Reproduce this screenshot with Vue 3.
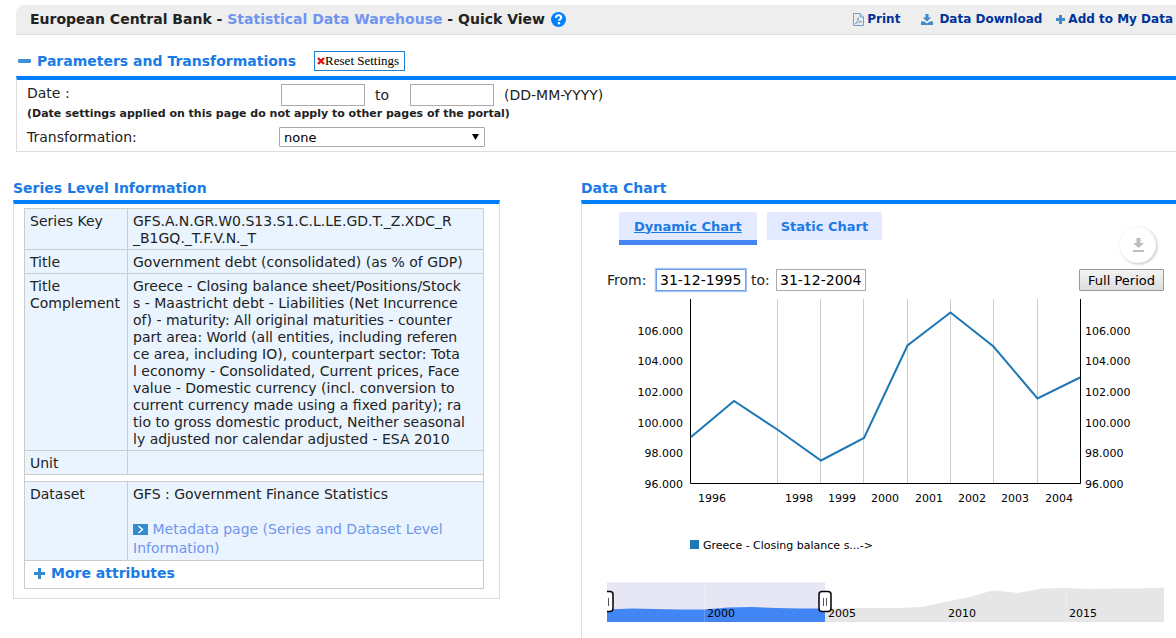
<script setup>
import { ref } from 'vue'

const dateFrom = ref('')
const dateTo = ref('')
const transformation = ref('none')
const periodFrom = ref('31-12-1995')
const periodTo = ref('31-12-2004')

const rows = [
  { name: 'Series Key', value: 'GFS.A.N.GR.W0.S13.S1.C.L.LE.GD.T._Z.XDC_R\n_B1GQ._T.F.V.N._T' },
  { name: 'Title', value: 'Government debt (consolidated) (as % of GDP)' },
  {
    name: 'Title\nComplement',
    value: [
      'Greece - Closing balance sheet/Positions/Stock',
      's - Maastricht debt - Liabilities (Net Incurrence',
      'of) - maturity: All original maturities - counter',
      'part area: World (all entities, including referen',
      'ce area, including IO), counterpart sector: Tota',
      'l economy - Consolidated, Current prices, Face',
      'value - Domestic currency (incl. conversion to',
      'current currency made using a fixed parity); ra',
      'tio to gross domestic product, Neither seasonal',
      'ly adjusted nor calendar adjusted - ESA 2010'
    ].join('\n')
  },
  { name: 'Unit', value: '' }
]

const yTicks = [
  { label: '106.000', y: 42 },
  { label: '104.000', y: 72 },
  { label: '102.000', y: 103 },
  { label: '100.000', y: 134 },
  { label: '98.000', y: 164 },
  { label: '96.000', y: 195 }
]
const xTicks = [
  { label: '1996', x: 105 },
  { label: '1998', x: 192 },
  { label: '1999', x: 235 },
  { label: '2000', x: 278 },
  { label: '2001', x: 322 },
  { label: '2002', x: 365 },
  { label: '2003', x: 408 },
  { label: '2004', x: 452 }
]
const gridLines = [170.5, 213.5, 256.5, 300.5, 343.5, 386.5, 430.5]
const line = '84,146 127,110 171,139 214,169.5 257,147 300.5,54.5 343.5,21.5 386.5,55.5 430.5,107.5 473,86.5'
const navLabels = [
  { label: '2000', x: 100 },
  { label: '2005', x: 221 },
  { label: '2010', x: 341 },
  { label: '2015', x: 462 }
]
</script>

<template>
  <div class="page">
    <header class="topbar">
      <h1>
        <span>European Central Bank - <a href="#">Statistical Data Warehouse</a> - Quick View</span>
        <svg class="help" viewBox="0 0 16 16" role="img" aria-label="Help">
          <circle cx="8" cy="8" r="8" fill="#0080ff" />
          <path d="M5.200 6.200C5.300 4.300 6.500 3.500 8 3.500c1.700 0 2.900 1 2.900 2.400 0 1.900-2.300 1.900-2.300 3.500" fill="none" stroke="#fff" stroke-width="2.200" />
          <rect x="7.300" y="10.800" width="2.400" height="2.400" fill="#fff" />
        </svg>
      </h1>
      <nav class="actions">
        <a href="#" class="print">
          <svg width="11" height="13" viewBox="0 0 11 13" fill="none" stroke="#6aa0d4">
            <path d="M.5.5h6.500l3.500 3.500v8.500H.5zM7 .5v3.500h3.500" />
            <path d="M2 11c2-1.500 3-4 3-6.500 0 2.500 1.500 4.300 4 4.500-2.500-.3-4.500.3-7 2z" stroke-width=".8" />
          </svg>
          Print</a>
        <a href="#" class="download">
          <svg width="12" height="11" viewBox="0 0 12 11" fill="#3f8acb">
            <path d="M4.500 0h3v3.500h2.700L6 7.500 1.800 3.500h2.700z" />
            <path d="M0 7.500h3.200L6 9.500 8.800 7.500H12V11H0z" />
          </svg>
          Data Download</a>
        <a href="#" class="add">
          <svg width="9" height="9" viewBox="0 0 9 9" fill="#3f8acb"><path d="M3 0h3v3h3v3H6v3H3V6H0V3h3z" /></svg>
          Add to My Data</a>
      </nav>
    </header>

    <section class="params">
      <div class="params-head">
        <svg width="13" height="4" viewBox="0 0 13 4"><rect width="13" height="4" rx="1" fill="#3f8fd6" /></svg>
        <h2>Parameters and Transformations</h2>
        <button type="button" class="reset">
          <svg width="8" height="8" viewBox="0 0 8 8"><path d="M1 1l6 6M7 1L1 7" stroke="#e01010" stroke-width="2.400" /></svg>Reset Settings</button>
      </div>
      <div class="params-body">
        <div class="field">
          <label class="name date-name" for="date-from">Date :</label>
          <input id="date-from" v-model="dateFrom" type="text" class="date">
          <label class="to" for="date-to">to</label>
          <input id="date-to" v-model="dateTo" type="text" class="date">
          <span class="format">(DD-MM-YYYY)</span>
        </div>
        <p class="note">(Date settings applied on this page do not apply to other pages of the portal)</p>
        <div class="field">
          <label class="name" for="transformation">Transformation:</label>
          <div class="select">
            <select id="transformation" v-model="transformation">
              <option>none</option>
            </select>
            <svg width="7" height="6" viewBox="0 0 7 6"><path d="M0 0h7L3.500 6z" /></svg>
          </div>
        </div>
      </div>
    </section>

    <main class="columns">
      <section class="series">
        <h2>Series Level Information</h2>
        <div class="panel">
          <table>
            <tbody>
              <tr v-for="row in rows" :key="row.name">
                <th scope="row">{{ row.name }}</th>
                <td>{{ row.value }}</td>
              </tr>
            </tbody>
            <tbody>
              <tr class="gap"><td colspan="2"></td></tr>
              <tr>
                <th scope="row">Dataset</th>
                <td class="dataset">
                  <p>GFS : Government Finance Statistics</p>
                  <a href="#"><svg width="15" height="11" viewBox="0 0 15 11"><rect width="15" height="11" fill="#338bd0" /><path d="M5.500 2l4 3.500-4 3.500" fill="none" stroke="#fff" stroke-width="1.500" /></svg> Metadata page (Series and Dataset Level Information)</a>
                </td>
              </tr>
              <tr class="more">
                <td colspan="2">
                  <a href="#"><svg width="11" height="11" viewBox="0 0 11 11" fill="#338bd0"><path d="M4 0h3v4h4v3H7v4H4V7H0V4h4z" /></svg>More attributes</a>
                </td>
              </tr>
            </tbody>
          </table>
        </div>
      </section>

      <section class="chart">
        <h2>Data Chart</h2>
        <div class="panel">
          <div class="tabs">
            <button type="button" class="tab active">Dynamic Chart</button>
            <button type="button" class="tab">Static Chart</button>
            <button type="button" class="save" aria-label="Download chart">
              <svg width="11" height="14" viewBox="0 0 11 14" fill="#bdbdbd"><path d="M3.500 0h4v5H11L5.500 10 0 5h3.500zM0 12h11v2H0z" /></svg>
            </button>
          </div>
          <div class="period">
            <label class="from-label" for="period-from">From:</label>
            <input id="period-from" v-model="periodFrom" type="text" class="focused">
            <label class="to-label" for="period-to">to:</label>
            <input id="period-to" v-model="periodTo" type="text">
            <button type="button" class="full">Full Period</button>
          </div>
          <svg class="plot" viewBox="0 0 557 331">
            <path v-for="x in gridLines" :key="x" :d="`M${x} 8V192`" stroke="#ccc" />
            <path d="M83.500 8V192.500H473.500V8" fill="none" stroke="#000" />
            <polyline :points="line" fill="none" stroke="#1f77b4" stroke-width="2" />
            <g v-for="t in yTicks" :key="t.label">
              <text :x="76" :y="t.y + 2" text-anchor="end">{{ t.label }}</text>
              <text :x="478" :y="t.y + 2">{{ t.label }}</text>
            </g>
            <text v-for="t in xTicks" :key="t.label" :x="t.x" y="211" text-anchor="middle">{{ t.label }}</text>
            <rect x="83" y="249" width="9" height="9" fill="#1f77b4" />
            <text x="96" y="258">Greece - Closing balance s...-&gt;</text>

            <path d="M218 331V318L242 317 290 317 315 316 328 313 363 306 385 299.500 393 300 411 302 435 297.500 459 297 483 298 508 297.500 533 297.500 557 296.500V331z" fill="#e6e6e6" />
            <rect y="291.500" width="218" height="39.500" fill="#e6e6f5" />
            <path d="M0 331V318.500L25 317.500 73 318.500 97 318.500 121 316.500 145 316 169 317 193 317.500 218 317.500V331z" fill="#4285f4" />
            <path d="M97.500 292V331" stroke="#fff" stroke-opacity=".2" />
            <path d="M459.500 297V331" stroke="#fff" stroke-opacity=".3" />
            <text v-for="t in navLabels" :key="t.label" :x="t.x" y="326">{{ t.label }}</text>
            <path d="M0 300.500H3Q6 300.500 6 303.500V317.500Q6 320.500 3 320.500H0" fill="#fff" stroke="#000" stroke-width="1.500" />
            <path d="M1.500 307V315" stroke="#555" />
            <rect x="212" y="300.500" width="12" height="20" rx="3" fill="#fff" stroke="#000" stroke-width="1.500" />
            <path d="M216.500 307V315M219.500 307V315" stroke="#555" />
          </svg>
        </div>
      </section>
    </main>
  </div>
</template>

<style>
body {
  margin: 0;
  background: #fff;
}
</style>

<style scoped>
* {
  box-sizing: border-box;
}
.page {
  min-height: 100vh;
  display: flex;
  flex-direction: column;
  padding-top: 5px;
  font: 14px/17px Verdana, "DejaVu Sans", sans-serif;
  color: #222;
}
h1, h2, p {
  margin: 0;
}
a {
  color: #7094f0;
  text-decoration: none;
}
button, input, select {
  font-family: inherit;
  color: #000;
}
.topbar {
  display: flex;
  justify-content: space-between;
  align-items: center;
  height: 30px;
  margin-left: 16px;
  padding: 0 3px 0 14px;
  background: #eee;
  border-bottom: 1px solid #ddd;
  border-top-left-radius: 8px;
  white-space: nowrap;
}
h1 {
  display: flex;
  align-items: center;
  gap: 6px;
  font-size: 14px;
}
.help {
  width: 15px;
  height: 15px;
}
.actions {
  display: flex;
  gap: 14px;
  font-size: 12px;
  font-weight: bold;
}
.actions a {
  display: flex;
  align-items: center;
  gap: 3px;
  color: #003299;
}
.actions .print {
  margin-right: 7px;
}
.actions .download {
  gap: 6px;
}
.params {
  margin: 14px 0 0 16px;
}
.params-head {
  display: flex;
  align-items: center;
  height: 27px;
  padding: 0 2px 3px;
  gap: 6px;
}
h2 {
  color: #1a7ae6;
  font-size: 14px;
  line-height: 18px;
}
.reset {
  display: flex;
  align-items: center;
  height: 20px;
  margin-left: 12px;
  padding: 0 5px 0 2px;
  border: 1px solid #1f7fcf;
  background: #fff;
  font: 13px/16px "Liberation Serif", serif;
}
.params-body {
  border: 1px solid #ddd;
  border-top: 4px solid #0080ff;
  border-right: 0;
  padding: 4px 0 4px 10px;
}
.field {
  display: flex;
  align-items: center;
}
.name {
  width: 252px;
}
.date-name {
  width: 254px;
  padding-bottom: 4px;
}
.date {
  width: 84px;
  height: 22px;
  border: 1px solid #aaa;
}
.to {
  width: 45px;
  padding-left: 10px;
}
.format {
  margin-left: 10px;
}
.note {
  margin-bottom: 6px;
  font-size: 11px;
  line-height: 15px;
  font-weight: bold;
}
.select {
  position: relative;
  width: 206px;
}
.select select {
  display: block;
  width: 100%;
  height: 20px;
  padding: 0 4px;
  appearance: none;
  border: 1px solid #aaa;
  border-radius: 1px;
  background: #fff;
  font-size: 13px;
}
.select svg {
  position: absolute;
  right: 6px;
  top: 7px;
  pointer-events: none;
}
.columns {
  flex: 1;
  display: grid;
  grid-template-columns: 487fr 595fr;
  gap: 81px;
  margin: 27px 0 0 13px;
}
.columns > section {
  display: flex;
  flex-direction: column;
}
.series {
  align-self: start;
}
.panel {
  flex: 1;
  margin-top: 3px;
  border: 1px solid #ddd;
  border-top: 4px solid #0080ff;
}
.series .panel {
  padding: 4px 15px 9px 10px;
}
table {
  width: 100%;
  border-collapse: collapse;
  table-layout: auto;
}
th, td {
  border: 1px solid #ccc;
  background: #e9f4ff;
  padding: 4px 5px 2px;
  font-weight: normal;
  text-align: left;
  vertical-align: top;
  white-space: pre;
}
th {
  width: 103px;
}
tr {
  height: 24px;
}
.gap, .gap td {
  height: 7px;
  padding: 0;
  background: #fff;
}
.dataset {
  white-space: normal;
}
.dataset p {
  margin-bottom: 17px;
}
.dataset a {
  line-height: 19px;
}
.dataset svg {
  vertical-align: -1px;
}
.more td {
  height: 28px;
  padding: 0 9px 2px;
  background: #fff;
  white-space: normal;
  vertical-align: middle;
}
.more a {
  display: flex;
  align-items: center;
  gap: 6px;
  color: #1a7ae6;
  font-weight: bold;
}
.chart .panel {
  border-right: 0;
  border-bottom: 0;
  padding: 8px 12px 0 25px;
}
.tabs {
  display: flex;
  align-items: flex-start;
  gap: 10px;
  padding: 0 8px 0 12px;
}
.tab {
  height: 28px;
  padding: 0 14px;
  border: 0;
  border-radius: 3px 3px 0 0;
  background: #e3eaff;
  color: #1a7ae6;
  font-size: 13px;
  font-weight: bold;
}
.tab.active {
  height: 33px;
  padding: 0 15px;
  border-bottom: 5px solid #4285f4;
  text-decoration: underline;
}
.save {
  display: flex;
  align-items: center;
  justify-content: center;
  width: 36px;
  height: 36px;
  margin: 15px 0 0 auto;
  padding: 0;
  border: 0;
  border-radius: 50%;
  background: #fff;
  box-shadow: 1px 1px 3px rgba(0, 0, 0, 0.25);
}
.period {
  display: flex;
  align-items: center;
  gap: 5px;
  margin-top: 6px;
}
.from-label {
  width: 44px;
}
.to-label {
  width: 20px;
}
.period input {
  width: 90px;
  height: 22px;
  padding: 0 3px;
  border: 1px solid #aaa;
  font-size: 14px;
}
.period .focused {
  border-color: #6f9be8;
  box-shadow: 0 0 1px 1px #a9c5f5;
}
.full {
  height: 22px;
  margin-left: auto;
  padding: 0 8px;
  border: 1px solid #999;
  border-radius: 1px;
  background: linear-gradient(#f4f4f4, #ddd);
  font-size: 13px;
}
.plot {
  display: block;
  width: 100%;
}
.plot text {
  font-size: 11px;
  fill: #000;
}
</style>
